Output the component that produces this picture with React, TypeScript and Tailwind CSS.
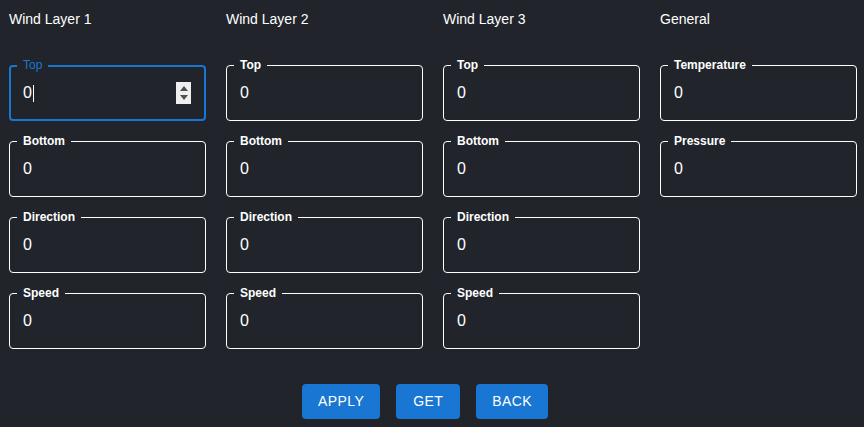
import React from 'react';

type Field = { label: string; focused?: boolean };

const columns: { title: string; fields: Field[] }[] = [
  {
    title: 'Wind Layer 1',
    fields: [{ label: 'Top', focused: true }, { label: 'Bottom' }, { label: 'Direction' }, { label: 'Speed' }],
  },
  {
    title: 'Wind Layer 2',
    fields: [{ label: 'Top' }, { label: 'Bottom' }, { label: 'Direction' }, { label: 'Speed' }],
  },
  {
    title: 'Wind Layer 3',
    fields: [{ label: 'Top' }, { label: 'Bottom' }, { label: 'Direction' }, { label: 'Speed' }],
  },
  {
    title: 'General',
    fields: [{ label: 'Temperature' }, { label: 'Pressure' }],
  },
];

const OutlinedField: React.FC<Field> = ({ label, focused }) => {
  return (
    <div
      className={
        focused
          ? 'relative flex h-[56px] w-[197px] items-center rounded-[4px] border-2 border-[#1976d2] pl-[12px] pr-[12px]'
          : 'relative flex h-[56px] w-[197px] items-center rounded-[4px] border border-white pl-[13px] pr-[13px]'
      }
    >
      {/* label sits on top of the border line */}
      <span
        className={
          focused
            ? 'absolute left-[6px] top-[-8px] bg-[#21252b] px-[6px] text-[12px] leading-[12px] text-[#1976d2]'
            : 'absolute left-[7px] top-[-7px] bg-[#21252b] px-[6px] text-[12px] font-bold leading-[12px] text-white'
        }
      >
        {label}
      </span>
      <span className="text-[16px] leading-[20px] text-white">0</span>
      {focused && <span className="ml-[1px] h-[17px] w-px bg-white" />}
      {focused && (
        <div className="ml-auto mr-[1px] flex h-[22px] w-[15px] flex-col items-center justify-center gap-[4px] bg-[#efefef]">
          <svg width="8" height="5" viewBox="0 0 8 5">
            <path d="M0 5 L4 0 L8 5 Z" fill="#505050" />
          </svg>
          <svg width="8" height="5" viewBox="0 0 8 5">
            <path d="M0 0 L4 5 L8 0 Z" fill="#505050" />
          </svg>
        </div>
      )}
    </div>
  );
};

export default function App() {
  return (
    <div
      className="h-[427px] w-[864px] overflow-hidden bg-[#21252b] text-white"
      style={{ fontFamily: '"Liberation Sans", Arial, sans-serif' }}
    >
      <div className="flex gap-[20px] pl-[9px] pt-[9px]">
        {columns.map((col) => (
          <div key={col.title} className="flex w-[197px] flex-col">
            <h2 className="h-[20px] text-[14px] leading-[20px]">{col.title}</h2>
            <div className="mt-[36px] flex flex-col gap-[20px]">
              {col.fields.map((f) => (
                <OutlinedField key={f.label} {...f} />
              ))}
            </div>
          </div>
        ))}
      </div>

      <div className="mt-[35px] flex justify-center gap-[16px] pr-[14px]">
        {['APPLY', 'GET', 'BACK'].map((b) => (
          <button
            key={b}
            className="h-[35px] min-w-[64px] rounded-[4px] bg-[#1976d2] px-4 text-[14px] leading-[35px] tracking-[0.4px] text-white"
          >
            {b}
          </button>
        ))}
      </div>
    </div>
  );
}
